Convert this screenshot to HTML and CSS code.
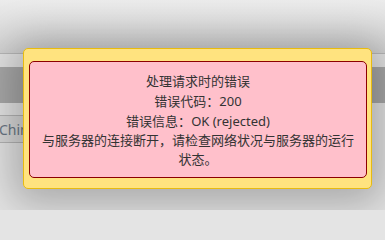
FILE: index.html
```html
<!DOCTYPE html>
<html lang="zh">
<head>
<meta charset="utf-8">
<title>错误</title>
<link rel="stylesheet" href="styles.css">
</head>
<body>
<div class="screen">
  <div class="page">
    <div class="header"></div>
    <div class="band"></div>
    <div class="search"><span class="placeholder">China</span></div>
  </div>
  <div class="dialog">
    <div class="message">
      <div>处理请求时的错误</div>
      <div>错误代码<span class="colon">：</span>200</div>
      <div>错误信息<span class="colon">：</span>OK (rejected)</div>
      <div>与服务器的连接断开，请检查网络状况与服务器的运行状态。</div>
    </div>
  </div>
</div>
</body>
</html>
```
FILE: styles.css
```css
html, body {
  margin: 0;
  padding: 0;
  width: 385px;
  height: 210px;
  overflow: hidden;
  background: #e4e4e4;
}
.screen {
  position: relative;
  width: 385px;
  height: 210px;
  overflow: hidden;
  background: #e4e4e4;
  font-family: "Noto Sans", "Noto Sans CJK SC", sans-serif;
}
.page {
  display: flex;
  flex-direction: column;
}
.header {
  height: 53px;
  border-bottom: 1px solid #b9b9b9;
  background: linear-gradient(#ececec, #d2d2d2);
}
.band {
  margin-top: 13px;
  height: 36px;
  background: #a9a9a9;
}
.search {
  margin-top: 12px;
  margin-left: -10px;
  width: 120px;
  height: 26px;
  border: 1px solid #b4b4b4;
  background: #d8d8d8;
  display: flex;
  align-items: center;
  padding-left: 8px;
}
.placeholder {
  font-size: 14px;
  color: #6b7785;
}
.dialog {
  position: absolute;
  left: 23px;
  top: 48px;
  width: 349px;
  height: 141px;
  box-sizing: border-box;
  background: #ffe37f;
  border: 1px solid #e8bb10;
  border-radius: 5px;
  padding: 12px 4px 10px 5px;
  box-shadow: 0 4px 40px 12px rgba(0, 0, 0, 0.26);
}
.message {
  box-sizing: border-box;
  height: 117px;
  background: #ffc0cb;
  border: 1px solid #8b0000;
  border-radius: 5px;
  padding: 10px 9px;
  text-align: center;
  font-size: 13px;
  line-height: 19px;
  color: #333333;
}
.colon {
  font-family: "Noto Sans CJK TC", sans-serif;
}
```
